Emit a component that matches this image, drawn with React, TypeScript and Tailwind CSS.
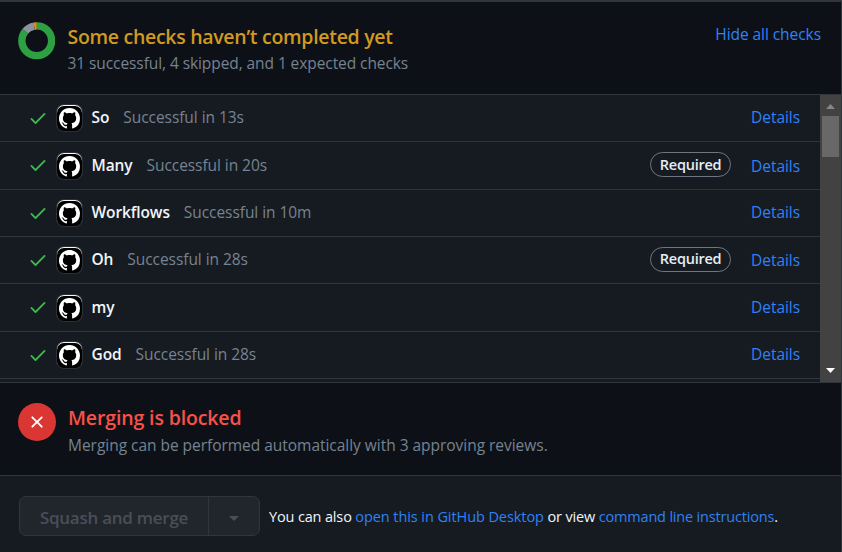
const CHECK =
  "M13.78 4.22a.75.75 0 0 1 0 1.06l-7.25 7.25a.75.75 0 0 1-1.06 0L2.22 9.28a.75.75 0 0 1 .018-1.042.75.75 0 0 1 1.042-.018L6 10.94l6.72-6.72a.75.75 0 0 1 1.06 0Z";
const CROSS =
  "M3.72 3.72a.75.75 0 0 1 1.06 0L8 6.94l3.22-3.22a.749.749 0 0 1 1.275.326.749.749 0 0 1-.215.734L9.06 8l3.22 3.22a.749.749 0 0 1-.326 1.275.749.749 0 0 1-.734-.215L8 9.06l-3.22 3.22a.751.751 0 0 1-1.042-.018.751.751 0 0 1-.018-1.042L6.94 8 3.72 4.78a.75.75 0 0 1 0-1.06Z";
const MARK =
  "M8 0C3.58 0 0 3.58 0 8c0 3.54 2.29 6.53 5.47 7.59.4.07.55-.17.55-.38 0-.19-.01-.82-.01-1.49-2.01.37-2.53-.49-2.69-.94-.09-.23-.48-.94-.82-1.13-.28-.15-.68-.52-.01-.53.63-.01 1.08.58 1.23.82.72 1.21 1.87.87 2.33.66.07-.52.28-.87.51-1.07-1.78-.2-3.64-.89-3.64-3.95 0-.87.31-1.59.82-2.15-.08-.2-.36-1.02.08-2.12 0 0 .67-.21 2.2.82.64-.18 1.32-.27 2-.27.68 0 1.36.09 2 .27 1.53-1.04 2.2-.82 2.2-.82.44 1.1.16 1.92.08 2.12.51.56.82 1.27.82 2.15 0 3.07-1.87 3.75-3.65 3.95.29.25.54.73.54 1.48 0 1.07-.01 1.93-.01 2.2 0 .21.15.46.55.38A8.012 8.012 0 0 0 16 8c0-4.42-3.58-8-8-8z";

type Check = { name: string; status?: string; required?: boolean; height: string };

const checks: Check[] = [
  { name: "So", status: "Successful in 13s", height: "h-[47px]" },
  { name: "Many", status: "Successful in 20s", required: true, height: "h-12" },
  { name: "Workflows", status: "Successful in 10m", height: "h-[47px]" },
  { name: "Oh", status: "Successful in 28s", required: true, height: "h-[47px]" },
  { name: "my", height: "h-12" },
  { name: "God", status: "Successful in 28s", height: "h-[47px]" },
];

function StatusDonut() {
  return (
    <svg className="size-[37.5px] shrink-0" viewBox="0 0 38 38" fill="none" strokeWidth="7.5">
      <g transform="rotate(-90 19 19)">
        <circle cx="19" cy="19" r="15.1" pathLength="36" stroke="#2ea043" strokeDasharray="31 5" />
        <circle cx="19" cy="19" r="15.1" pathLength="36" stroke="#8b949e" strokeDasharray="4 32" strokeDashoffset="-31" />
        <circle cx="19" cy="19" r="15.1" pathLength="36" stroke="#d29922" strokeDasharray="1 35" strokeDashoffset="-35" />
      </g>
    </svg>
  );
}

function Avatar() {
  return (
    <span className="mt-[2px] ml-[9px] flex h-[26px] w-[25px] shrink-0 items-center justify-center rounded-[7px] bg-black shadow-[0_0_0_1px_#2b3036,inset_0_1px_0_#f0f6fc]">
      <svg className="mt-px size-[21px]" viewBox="0 0 16 16" fill="#ffffff">
        <path d={MARK} />
      </svg>
    </span>
  );
}

function CheckRow({ check }: { check: Check }) {
  return (
    <div className={`flex shrink-0 items-center border-b border-[#30363d] pr-5 pb-[2px] pl-7 ${check.height}`}>
      <svg className="mt-px size-5 shrink-0" viewBox="0 0 16 16" fill="#3fb950">
        <path d={CHECK} />
      </svg>
      <Avatar />
      <span className="ml-[9.5px] font-semibold tracking-[-0.1px] text-[#f0f6fc]">{check.name}</span>
      {check.status && <span className="ml-[14px] text-[#768390]">{check.status}</span>}
      <span className="ml-auto flex items-center">
        {check.required && (
          <span className="mr-[20px] flex h-[25px] w-[81px] items-center justify-center rounded-full border border-[#6e7681] text-[14.5px] font-semibold tracking-[-0.25px] text-[#e6edf3]">
            Required
          </span>
        )}
        <a className={`text-[#2f81f7] ${check.required ? "pt-[2px]" : ""}`}>Details</a>
      </span>
    </div>
  );
}

function Scrollbar() {
  return (
    <div className="flex w-[21px] shrink-0 flex-col items-center bg-[#424242]">
      <svg className="h-[21px] w-[21px]" viewBox="0 0 21 21" fill="#868686">
        <path d="M10.5 9 15 14H6z" />
      </svg>
      <div className="h-[41px] w-[17px] bg-[#686868]" />
      <svg className="mt-auto h-[21px] w-[21px]" viewBox="0 0 21 21" fill="#ffffff">
        <path d="M6 7h9l-4.5 5z" />
      </svg>
    </div>
  );
}

export default function App() {
  return (
    <div className="flex h-[552px] w-[842px] flex-col overflow-hidden border-t-2 border-r border-[#30363d] bg-[#0d1117] font-['Open_Sans','Noto_Sans',sans-serif] text-[15.5px] leading-6 tracking-[-0.06px] whitespace-nowrap">
      <header className="flex h-[93px] shrink-0 border-b border-[#30363d] pt-5 pr-5 pl-[17.5px]">
        <StatusDonut />
        <div className="ml-[12.5px]">
          <h1 className="mt-px text-[19.5px] leading-7 font-semibold tracking-[-0.3px] text-[#d29922]">
            Some checks haven’t completed yet
          </h1>
          <p className="tracking-[-0.08px] text-[#768390]">31 successful, 4 skipped, and 1 expected checks</p>
        </div>
        <a className="ml-auto text-[#2f81f7]">Hide all checks</a>
      </header>

      <section className="flex h-[288px] shrink-0 border-b border-[#30363d] bg-[#161b22]">
        <div className="flex min-w-0 flex-1 flex-col overflow-hidden">
          {checks.map((check) => (
            <CheckRow key={check.name} check={check} />
          ))}
        </div>
        <Scrollbar />
      </section>

      <section className="flex h-[93px] shrink-0 border-b border-[#30363d] pt-5 pl-[18px]">
        <span className="flex size-[37.5px] shrink-0 items-center justify-center rounded-full bg-[#da3633]">
          <svg className="size-5" viewBox="0 0 16 16" fill="#ffffff">
            <path d={CROSS} />
          </svg>
        </span>
        <div className="ml-[12.5px]">
          <h2 className="mt-px text-[19.5px] leading-7 font-semibold tracking-[-0.13px] text-[#f85149]">
            Merging is blocked
          </h2>
          <p className="mt-px tracking-[-0.03px] text-[#768390]">
            Merging can be performed automatically with 3 approving reviews.
          </p>
        </div>
      </section>

      <footer className="flex flex-1 items-start bg-[#161b22] pt-5 pl-[19px]">
        <div className="flex h-10 w-[241px] overflow-hidden rounded-[7px] border border-[#30363d] bg-[#21262d]">
          <button className="flex w-[189px] items-center justify-center border-r border-[#30363d] pt-1 text-[17px] font-semibold tracking-[-0.26px] text-[#484f58]">
            Squash and merge
          </button>
          <button className="flex flex-1 items-center justify-center pt-[5px]">
            <svg className="h-[5px] w-[10px]" viewBox="0 0 10 5" fill="#484f58">
              <path d="M0 0h10L5 5z" />
            </svg>
          </button>
        </div>
        <p className="mt-[9px] ml-[9px] text-[14.5px] tracking-[-0.15px] text-[#f0f6fc]">
          You can also{" "}
          <a className="tracking-[-0.08px] text-[#2f81f7]">open this in GitHub Desktop</a> or view{" "}
          <a className="tracking-[-0.18px] text-[#2f81f7]">command line instructions</a>.
        </p>
      </footer>
    </div>
  );
}
